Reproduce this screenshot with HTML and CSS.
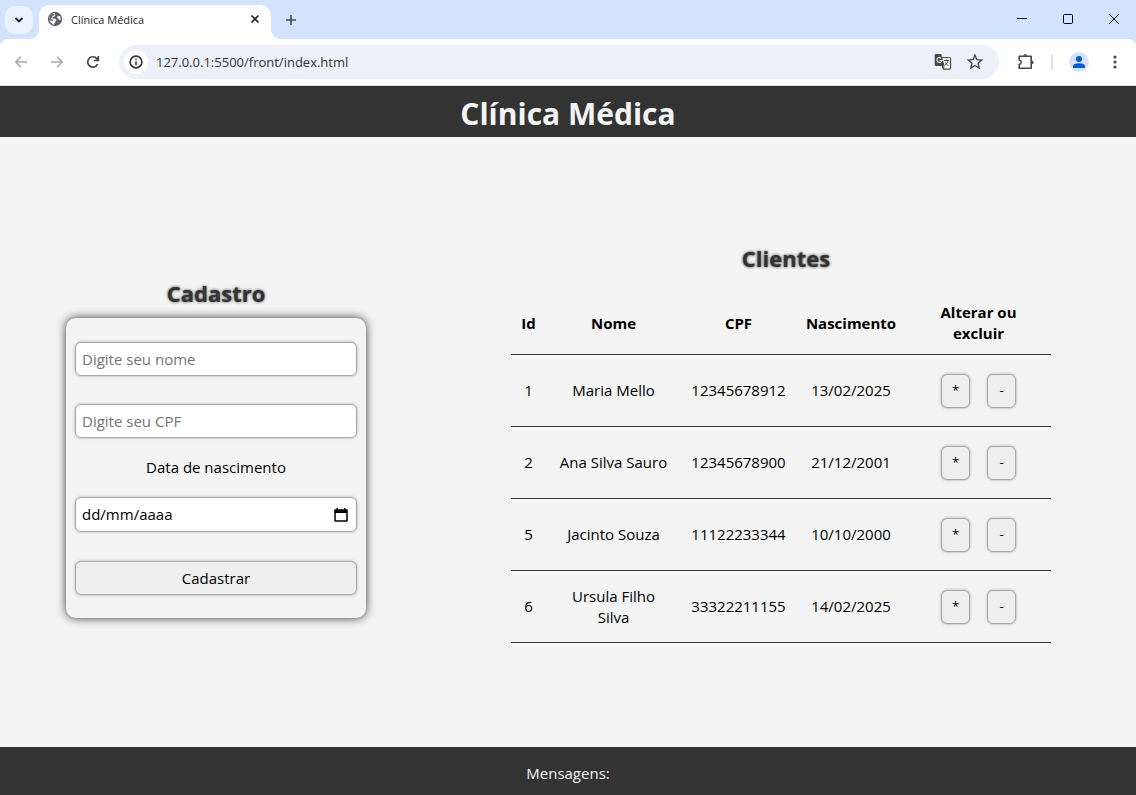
FILE: index.html
```html
<!DOCTYPE html>
<html lang="pt-BR">
<head>
<meta charset="utf-8">
<meta name="viewport" content="width=device-width, initial-scale=1">
<title>Clínica Médica</title>
<link rel="stylesheet" href="styles.css">
</head>
<body>
<div class="browser">
  <div class="tabstrip">
    <button class="tab-search" type="button" aria-label="Pesquisar guias"><svg width="12" height="12" viewBox="0 0 12 12"><path d="M2.500 4 6 7.500 9.500 4" fill="none" stroke="#1f1f1f" stroke-width="1.800"/></svg></button>
    <div class="tab">
      <svg class="tab-icon" width="16" height="16" viewBox="0 0 16 16"><circle cx="8" cy="8" r="7.200" fill="#5f6368"/><path d="M8.300 1.800 7.500 3.300 8.300 4.500 6.800 6 5.300 6.200 5.600 7.700H8.300L9.500 9.200 8.800 10.500 7.700 11 7.200 13.600Q3 13 2.300 9.200L5.600 10 6.400 9.300 5 8.200 2.300 8Q2.300 2.700 8.300 1.800z" fill="#fff"/><path d="M2.300 8Q2.400 3.800 6.200 2.500L7 4.300 5.400 5.300 4 7.700zM2.300 9.500 5.200 12.500 4.500 13.300z" fill="#5f6368"/><path d="M10.200 5.300 12.800 5.100Q14 7 13.500 9.300L12 8.800 11.500 7.500 10.300 7z" fill="#fff"/></svg>
      <span class="tab-title">Clínica Médica</span>
      <button class="tab-close" type="button" aria-label="Fechar guia"><svg width="10" height="10" viewBox="0 0 10 10"><path d="m1.500 1.500 7 7m0-7-7 7" stroke="#1f1f1f" stroke-width="1.600"/></svg></button>
    </div>
    <button class="tab-new" type="button" aria-label="Nova guia"><svg width="12" height="12" viewBox="0 0 12 12"><path d="M6 1v10M1 6h10" stroke="#474747" stroke-width="1.600"/></svg></button>
    <div class="window-controls">
      <button type="button" aria-label="Minimizar"><svg width="12" height="12" viewBox="0 0 12 12"><path d="M1 5.500h10" stroke="#000"/></svg></button>
      <button type="button" aria-label="Maximizar"><svg width="12" height="12" viewBox="0 0 12 12"><rect x="1.500" y="1.500" width="9" height="9" rx="1" fill="none" stroke="#000"/></svg></button>
      <button type="button" aria-label="Fechar"><svg width="12" height="12" viewBox="0 0 12 12"><path d="m1 1 10 10M11 1 1 11" stroke="#000"/></svg></button>
    </div>
  </div>
  <div class="toolbar">
    <div class="nav">
      <button type="button" aria-label="Voltar"><svg width="14" height="14" viewBox="0 0 14 14"><path d="M13 7H2m5-5.300L1.800 7 7 12.300" fill="none" stroke="#a8a8a8" stroke-width="1.600"/></svg></button>
      <button type="button" aria-label="Avançar"><svg width="14" height="14" viewBox="0 0 14 14"><path d="M1 7h11M7 1.700 12.200 7 7 12.300" fill="none" stroke="#a8a8a8" stroke-width="1.600"/></svg></button>
      <button type="button" aria-label="Recarregar"><svg width="14" height="14" viewBox="0 0 14 14"><path d="M11.600 9.200A5.200 5.200 0 1 1 10.900 3.600L12 4.800M12.300 1v4.500H7.800" fill="none" stroke="#474747" stroke-width="1.700"/></svg></button>
    </div>
    <div class="omnibox">
      <button class="site-info" type="button" aria-label="Informações do site"><svg width="14" height="14" viewBox="0 0 14 14"><circle cx="7" cy="7" r="5.900" fill="none" stroke="#333" stroke-width="1.600"/><path d="M7 6.300v4M7 3.600v1.500" stroke="#333" stroke-width="1.500"/></svg></button>
      <input class="url" type="text" aria-label="Endereço" value="127.0.0.1:5500/front/index.html">
      <button class="omnibox-action" type="button" aria-label="Traduzir"><svg width="18" height="18" viewBox="0 0 18 18"><path d="M8 4.500h7.200q1.300 0 1.300 1.300v9q0 1.300-1.300 1.300H9.500L8 12" fill="#fff" stroke="#474747" stroke-width="1.200"/><path d="M2 1h5.200l3.500 12H2Q.7 13 .7 11.700V2.300Q.7 1 2 1z" fill="#474747"/><path d="M7.300 5.300A2.500 2.500 0 1 0 7.900 7.500H5.600" fill="none" stroke="#fff" stroke-width="1.100"/><path d="M10 7.500h5M12.300 6.400v1M14.200 7.500q-.6 3.200-3.200 4.700M11.200 9.300q1.200 2.400 3.300 3.500M10 13l-.5 3" fill="none" stroke="#474747"/></svg></button>
      <button class="omnibox-action" type="button" aria-label="Favoritos"><svg width="18" height="18" viewBox="0 0 18 18"><path d="m9 2.300 1.900 4.400 4.800.4-3.600 3.200 1.100 4.700L9 12.500 4.800 15l1.100-4.700-3.600-3.200 4.800-.4z" fill="none" stroke="#474747" stroke-width="1.400"/></svg></button>
    </div>
    <button class="extensions" type="button" aria-label="Extensões"><svg width="18" height="18" viewBox="0 0 18 18"><path d="M2.200 3.200h12v12.100h-12v-3.800q2-.4 2-2.200t-2-2.300z" fill="none" stroke="#474747" stroke-width="1.600" stroke-linejoin="round"/><path d="M6.300 2.800a1.900 1.900 0 0 1 3.800 0zM14.700 7.400a1.900 1.900 0 0 1 0 3.800z" fill="#474747"/></svg></button>
    <span class="separator"></span>
    <button class="profile" type="button" aria-label="Perfil"><svg width="14" height="14" viewBox="0 0 14 14"><circle cx="7" cy="4" r="3" fill="#0b57d0"/><path d="M1 13v-1.500Q1 8.300 7 8.300t6 3.200V13z" fill="#0b57d0"/></svg></button>
    <button class="menu" type="button" aria-label="Menu"><svg width="4" height="16" viewBox="0 0 4 16"><g fill="#474747"><circle cx="2" cy="3" r="1.600"/><circle cx="2" cy="8" r="1.600"/><circle cx="2" cy="13" r="1.600"/></g></svg></button>
  </div>
</div>

<header class="header"><h1>Clínica Médica</h1></header>

<main class="main">
  <section class="register">
    <h2>Cadastro</h2>
    <form class="form">
      <input class="control" type="text" placeholder="Digite seu nome" aria-label="Nome">
      <input class="control" type="text" placeholder="Digite seu CPF" aria-label="CPF">
      <div class="date-field">
        <label for="nascimento">Data de nascimento</label>
        <div class="control date-control">
          <input id="nascimento" type="text" value="dd/mm/aaaa">
          <button type="button" aria-label="Abrir calendário"><svg width="14" height="16" viewBox="0 0 14 16"><path d="M1 3h12v11H1z" fill="none" stroke="#000" stroke-width="1.500" stroke-linejoin="round"/><path d="M1 3h12v3H1zM2.500 1H4v2H2.500zM10 1h1.500v2H10z"/></svg></button>
        </div>
      </div>
      <button class="control submit" type="button">Cadastrar</button>
    </form>
  </section>

  <section class="clients">
    <h2>Clientes</h2>
    <table class="table">
      <colgroup><col class="col-id"><col class="col-name"><col class="col-cpf"><col class="col-birth"><col class="col-actions"></colgroup>
      <thead>
        <tr><th>Id</th><th>Nome</th><th>CPF</th><th>Nascimento</th><th>Alterar ou<br>excluir</th></tr>
      </thead>
      <tbody>
        <tr><td>1</td><td>Maria Mello</td><td>12345678912</td><td>13/02/2025</td><td><div class="actions"><button class="control" type="button">*</button><button class="control" type="button">-</button></div></td></tr>
        <tr><td>2</td><td>Ana Silva Sauro</td><td>12345678900</td><td>21/12/2001</td><td><div class="actions"><button class="control" type="button">*</button><button class="control" type="button">-</button></div></td></tr>
        <tr><td>5</td><td>Jacinto Souza</td><td>11122233344</td><td>10/10/2000</td><td><div class="actions"><button class="control" type="button">*</button><button class="control" type="button">-</button></div></td></tr>
        <tr><td>6</td><td>Ursula Filho Silva</td><td>33322211155</td><td>14/02/2025</td><td><div class="actions"><button class="control" type="button">*</button><button class="control" type="button">-</button></div></td></tr>
      </tbody>
    </table>
  </section>
</main>

<footer class="footer"><p>Mensagens:</p></footer>
</body>
</html>
```

FILE: styles.css
```css
* {
  box-sizing: border-box;
  margin: 0;
  padding: 0;
}

body {
  display: flex;
  flex-direction: column;
  min-height: 100vh;
  background: #f4f4f4;
  color: #000;
  font: 15px/21px "Segoe UI", "Open Sans", "Noto Sans", sans-serif;
}

button,
input {
  border: 0;
  background: none;
  color: inherit;
  font: inherit;
}

svg {
  display: block;
}

/* Browser window */

.browser {
  background: #d3e3fd;
}

.browser button {
  display: grid;
  flex: none;
  place-items: center;
}

.tabstrip {
  display: flex;
  align-items: center;
  height: 39px;
  padding-left: 5px;
}

.browser .tab-search {
  width: 28px;
  height: 28px;
  border-radius: 10px;
  background: #ebf2ff;
}

.tab {
  position: relative;
  display: flex;
  align-items: center;
  align-self: flex-end;
  width: 232px;
  height: 34px;
  margin-left: 6px;
  padding: 0 8px 6px;
  border-radius: 10px 10px 0 0;
  background: #fff;
}

.tab::before,
.tab::after {
  content: "";
  position: absolute;
  bottom: 0;
  width: 10px;
  height: 10px;
}

.tab::before {
  right: 100%;
  background: radial-gradient(circle at 0 0, transparent 10px, #fff 10px);
}

.tab::after {
  left: 100%;
  background: radial-gradient(circle at 100% 0, transparent 10px, #fff 10px);
}

.tab-title {
  flex: 1;
  padding-left: 8px;
  color: #1f1f1f;
  font-size: 11px;
}

.browser .tab-close {
  width: 16px;
  height: 16px;
}

.browser .tab-new {
  width: 28px;
  height: 28px;
  margin-left: 6px;
}

.window-controls {
  display: flex;
  align-self: flex-start;
  margin-left: auto;
  margin-right: -1px;
}

.window-controls button {
  width: 46px;
  height: 38px;
}

.toolbar {
  display: flex;
  align-items: center;
  height: 47px;
  padding: 0 7px;
  border-bottom: 1px solid #dcdcdc;
  border-radius: 8px 8px 0 0;
  background: #fff;
}

.nav {
  display: flex;
  gap: 8px;
}

.nav button {
  width: 28px;
  height: 28px;
}

.omnibox {
  display: flex;
  flex: 1;
  align-items: center;
  height: 34px;
  margin-left: 12px;
  padding: 0 8px 0 5px;
  border-radius: 17px;
  background: #ecf0f9;
}

.browser .site-info {
  width: 24px;
  height: 24px;
  border-radius: 50%;
  background: #fff;
}

.url {
  flex: 1;
  min-width: 0;
  padding-left: 8px;
  color: #333;
  font-size: 13px;
}

.browser .omnibox-action {
  width: 32px;
  height: 28px;
}

.browser .extensions {
  width: 28px;
  height: 28px;
  margin-left: 13px;
}

.separator {
  width: 2px;
  height: 16px;
  margin: 0 16px 0 11px;
  background: #d3e3fd;
}

.browser .profile {
  width: 20px;
  height: 20px;
  border-radius: 50%;
  background: #d3e3fd;
}

.browser .menu {
  width: 28px;
  height: 28px;
  margin-left: 12px;
}

/* Page */

.header {
  height: 51px;
  background: #333;
  color: #f4f4f4;
  text-align: center;
}

.header h1 {
  font-size: 30px;
  line-height: 55px;
}

.main {
  display: flex;
  flex: 1;
  flex-wrap: wrap;
  align-items: center;
  justify-content: space-around;
}

.main h2 {
  color: #333;
  font-size: 22px;
  line-height: 32px;
  text-align: center;
  text-shadow: 0 0 3px #333;
}

.register {
  width: 300px;
  padding-top: 11px;
}

.register h2 {
  margin-bottom: 9px;
}

.form {
  display: flex;
  flex-direction: column;
  gap: 28px;
  padding: 24px 9px 23px;
  border-radius: 10px;
  box-shadow: 0 0 10px #333;
}

.control {
  height: 34px;
  padding: 0 6px;
  border: 1px solid #a9a9a9;
  border-radius: 6px;
  background: #fff;
  box-shadow: 0 0 3px #a9a9a9;
}

.control::placeholder {
  color: #757575;
}

.date-field {
  display: flex;
  flex-direction: column;
  gap: 19px;
  margin: -9px 0 1px;
  text-align: center;
}

.date-control {
  display: flex;
  align-items: center;
  height: 35px;
  padding: 0 8px 0 6px;
}

.date-control input {
  flex: 1;
  min-width: 0;
}

button.control {
  background: #efefef;
}

.clients {
  width: 572px;
  padding: 1px 9px 0 13px;
}

.clients h2 {
  margin-bottom: 18px;
}

.table {
  width: 540px;
  border-collapse: collapse;
  table-layout: fixed;
  text-align: center;
}

.col-id { width: 35px; }
.col-name { width: 135px; }
.col-cpf { width: 115px; }
.col-birth { width: 110px; }

.table th,
.table td {
  height: 72px;
  padding: 0 10px;
  border-bottom: 1px solid #333;
}

.table th {
  height: 63px;
  padding: 0;
}

.actions {
  display: flex;
  gap: 17px;
  justify-content: center;
}

.actions .control {
  width: 29px;
  font-size: 13px;
}

.footer {
  padding: 16px 0 11px;
  background: #333;
  color: #f4f4f4;
  text-align: center;
}
```
